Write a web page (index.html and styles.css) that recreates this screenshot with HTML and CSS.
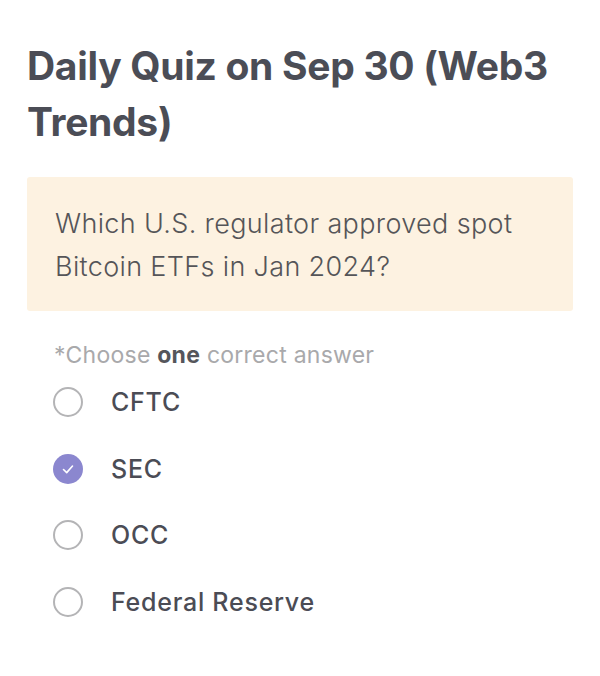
FILE: index.html
```html
<!DOCTYPE html>
<html>
<head>
<meta charset="utf-8">
<link rel="stylesheet" href="styles.css">
</head>
<body>
<main class="quiz">
  <h1 class="title">Daily Quiz on Sep 30 (Web3 Trends)</h1>
  <div class="question">Which U.S. regulator approved spot Bitcoin ETFs in Jan 2024?</div>
  <p class="hint">*Choose <b>one</b> correct answer</p>
  <ul class="options">
    <li class="option"><span class="radio"></span><span class="label">CFTC</span></li>
    <li class="option"><span class="radio checked"><svg viewBox="0 0 30 30" width="30" height="30"><path d="M10.5 15.5 L13.7 18.6 L19.5 12" fill="none" stroke="#fff" stroke-width="1.6" stroke-linecap="round" stroke-linejoin="round"/></svg></span><span class="label">SEC</span></li>
    <li class="option"><span class="radio"></span><span class="label">OCC</span></li>
    <li class="option"><span class="radio"></span><span class="label">Federal Reserve</span></li>
  </ul>
</main>
</body>
</html>
```
FILE: styles.css
```css
* { box-sizing: border-box; }
html, body { margin: 0; padding: 0; background: #fff; }
body { font-family: Inter, "Noto Sans", sans-serif; }
.quiz { padding: 38px 27px 0 27px; }
.title {
  margin: 0;
  font-size: 39px;
  font-weight: 700;
  line-height: 56px;
  color: #4b4d56;
  letter-spacing: -0.3px;
}
.question {
  margin-top: 27px;
  background: #fdf2e1;
  border-radius: 3px;
  padding: 25px 28px 23px 28px;
  font-size: 27px;
  line-height: 43px;
  color: #555558;
  font-weight: 300;
  letter-spacing: 0.35px;
}
.hint {
  margin: 30px 0 0 27px;
  font-size: 23px;
  line-height: 28px;
  color: #a9a9ab;
  letter-spacing: 0.25px;
}
.hint b { color: #55565b; font-weight: 700; }
.options { list-style: none; margin: 0; padding: 0 0 0 26px; }
.option {
  display: flex;
  align-items: center;
  height: 66.5px;
}
.radio {
  width: 30px; height: 30px;
  border: 2px solid #b4b4b6;
  border-radius: 50%;
  flex: none;
  display: flex;
}
.radio.checked { border: none; background: #8b87cf; }
.label {
  margin-left: 28px;
  font-size: 25px;
  color: #4b4c55;
  font-weight: 500;
  letter-spacing: 0.75px;
}
```
